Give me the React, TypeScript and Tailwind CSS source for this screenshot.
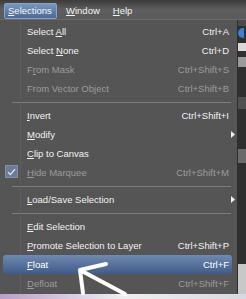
import React from 'react';

type Item =
  | { kind: 'sep' }
  | {
      kind: 'item';
      label: string;
      u: number; // index of the underlined letter
      shortcut?: string;
      disabled?: boolean;
      sub?: boolean;
      checked?: boolean;
      active?: boolean;
    };

const items: Item[] = [
  { kind: 'item', label: 'Select All', u: 7, shortcut: 'Ctrl+A' },
  { kind: 'item', label: 'Select None', u: 7, shortcut: 'Ctrl+D' },
  { kind: 'item', label: 'From Mask', u: 1, shortcut: 'Ctrl+Shift+S', disabled: true },
  { kind: 'item', label: 'From Vector Object', u: 14, shortcut: 'Ctrl+Shift+B', disabled: true },
  { kind: 'sep' },
  { kind: 'item', label: 'Invert', u: 0, shortcut: 'Ctrl+Shift+I' },
  { kind: 'item', label: 'Modify', u: 0, sub: true },
  { kind: 'item', label: 'Clip to Canvas', u: 0 },
  { kind: 'item', label: 'Hide Marquee', u: 0, shortcut: 'Ctrl+Shift+M', disabled: true, checked: true },
  { kind: 'sep' },
  { kind: 'item', label: 'Load/Save Selection', u: 0, sub: true },
  { kind: 'sep' },
  { kind: 'item', label: 'Edit Selection', u: 0 },
  { kind: 'item', label: 'Promote Selection to Layer', u: 0, shortcut: 'Ctrl+Shift+P' },
  { kind: 'item', label: 'Float', u: 0, shortcut: 'Ctrl+F', active: true },
  { kind: 'item', label: 'Defloat', u: 0, shortcut: 'Ctrl+Shift+F', disabled: true },
];

function Mnemonic({ text, u }: { text: string; u: number }) {
  return (
    <span>
      {text.slice(0, u)}
      <span className="underline underline-offset-[1px]">{text[u]}</span>
      {text.slice(u + 1)}
    </span>
  );
}

export default function App() {
  return (
    <div
      className="relative w-[246px] h-[299px] overflow-hidden bg-[#3a3a3a] flex flex-col text-[9.5px] leading-none"
      style={{ fontFamily: '"Liberation Sans", Arial, sans-serif' }}
    >
      {/* menubar */}
      <div className="h-[20px] shrink-0 bg-gradient-to-b from-[#3c3c3c] via-[#5e5e5e] to-[#5a5a5a] border-b border-[#6a6a6a] flex items-center text-[#f4f4f4] pt-[2px]">
        <div className="ml-[4px] w-[53px] h-[16px] rounded-[2px] border border-[#8aa2c4] bg-gradient-to-b from-[#7a96bf] to-[#4b6a97] flex items-center pl-[3px]">
          <Mnemonic text="Selections" u={0} />
        </div>
        <div className="ml-[9px]">
          <Mnemonic text="Window" u={0} />
        </div>
        <div className="ml-[13px]">
          <Mnemonic text="Help" u={0} />
        </div>
      </div>

      <div className="flex flex-1 min-h-0">
        {/* dropdown */}
        <div className="relative w-[238px] bg-[#555555] border-r border-[#2e2e2e] pt-[2px]">
          <div className="absolute left-[20px] top-0 bottom-0 w-px bg-[#5e5e5e]" />
          {items.map((it, i) =>
            it.kind === 'sep' ? (
              <div key={i} className="h-[8px] flex items-center ml-[12px] mr-[6px]">
                <div className="h-px w-full bg-[#7c7c7c]" />
              </div>
            ) : (
              <div
                key={i}
                className={`relative h-[19px] ml-[3px] mr-[5px] pl-[24px] pr-[3px] flex items-center justify-between ${
                  it.active
                    ? 'rounded-[3px] bg-gradient-to-b from-[#7189b0] to-[#3f5c88] text-white'
                    : it.disabled
                    ? 'text-[#9c9c9c]'
                    : 'text-[#f2f2f2]'
                }`}
              >
                {it.checked && (
                  <div className="absolute left-[2px] top-[2px] w-[13px] h-[13px] bg-[#6f7b96] border border-[#8390ab] flex items-center justify-center">
                    <svg width="9" height="8" viewBox="0 0 9 8">
                      <path d="M1 4.2 L3.4 6.5 L8 1.2" fill="none" stroke="#d8dde8" strokeWidth="1.4" />
                    </svg>
                  </div>
                )}
                <Mnemonic text={it.label} u={it.u} />
                {it.shortcut && <span>{it.shortcut}</span>}
                {it.sub && (
                  <svg className="absolute right-[-3px] top-[6px]" width="4" height="7" viewBox="0 0 4 7">
                    <path d="M0 0 L4 3.5 L0 7 Z" fill="#f0f0f0" />
                  </svg>
                )}
              </div>
            )
          )}
        </div>

        {/* panel behind the menu */}
        <div className="flex-1 flex flex-col bg-[#2f2f2f]">
          <div className="h-[6px] bg-[#4a4a4a]" />
          <div className="mt-[2px] h-[10px] w-[6px] rounded-l-full bg-[#3d7fd0]" />
          <div className="mt-[5px] h-[8px] bg-[#d9d9d9]" />
          <div className="mt-[6px] h-[10px] bg-[#9a9a9a]" />
          <div className="mt-[30px] h-[12px] bg-[#505050]" />
          <div className="mt-[40px] h-[14px] bg-[#6a6a6a]" />
          <div className="flex-1" />
          <div className="h-[30px] bg-[#c8c8c8]" />
        </div>
      </div>

      {/* image strip along the bottom */}
      <div className="h-[5px] shrink-0 bg-gradient-to-r from-[#b8a0c8] via-[#f0eef2] to-[#d8d8e0]" />

      {/* pointing arrow */}
      <svg className="absolute left-0 top-0 pointer-events-none" width="246" height="299" viewBox="0 0 246 299">
        <path
          d="M125 294 L80 270 M80 270 L106 264 M80 270 L83 293"
          fill="none"
          stroke="#ffffff"
          strokeWidth="4"
          strokeLinecap="round"
          strokeLinejoin="round"
        />
      </svg>
    </div>
  );
}
